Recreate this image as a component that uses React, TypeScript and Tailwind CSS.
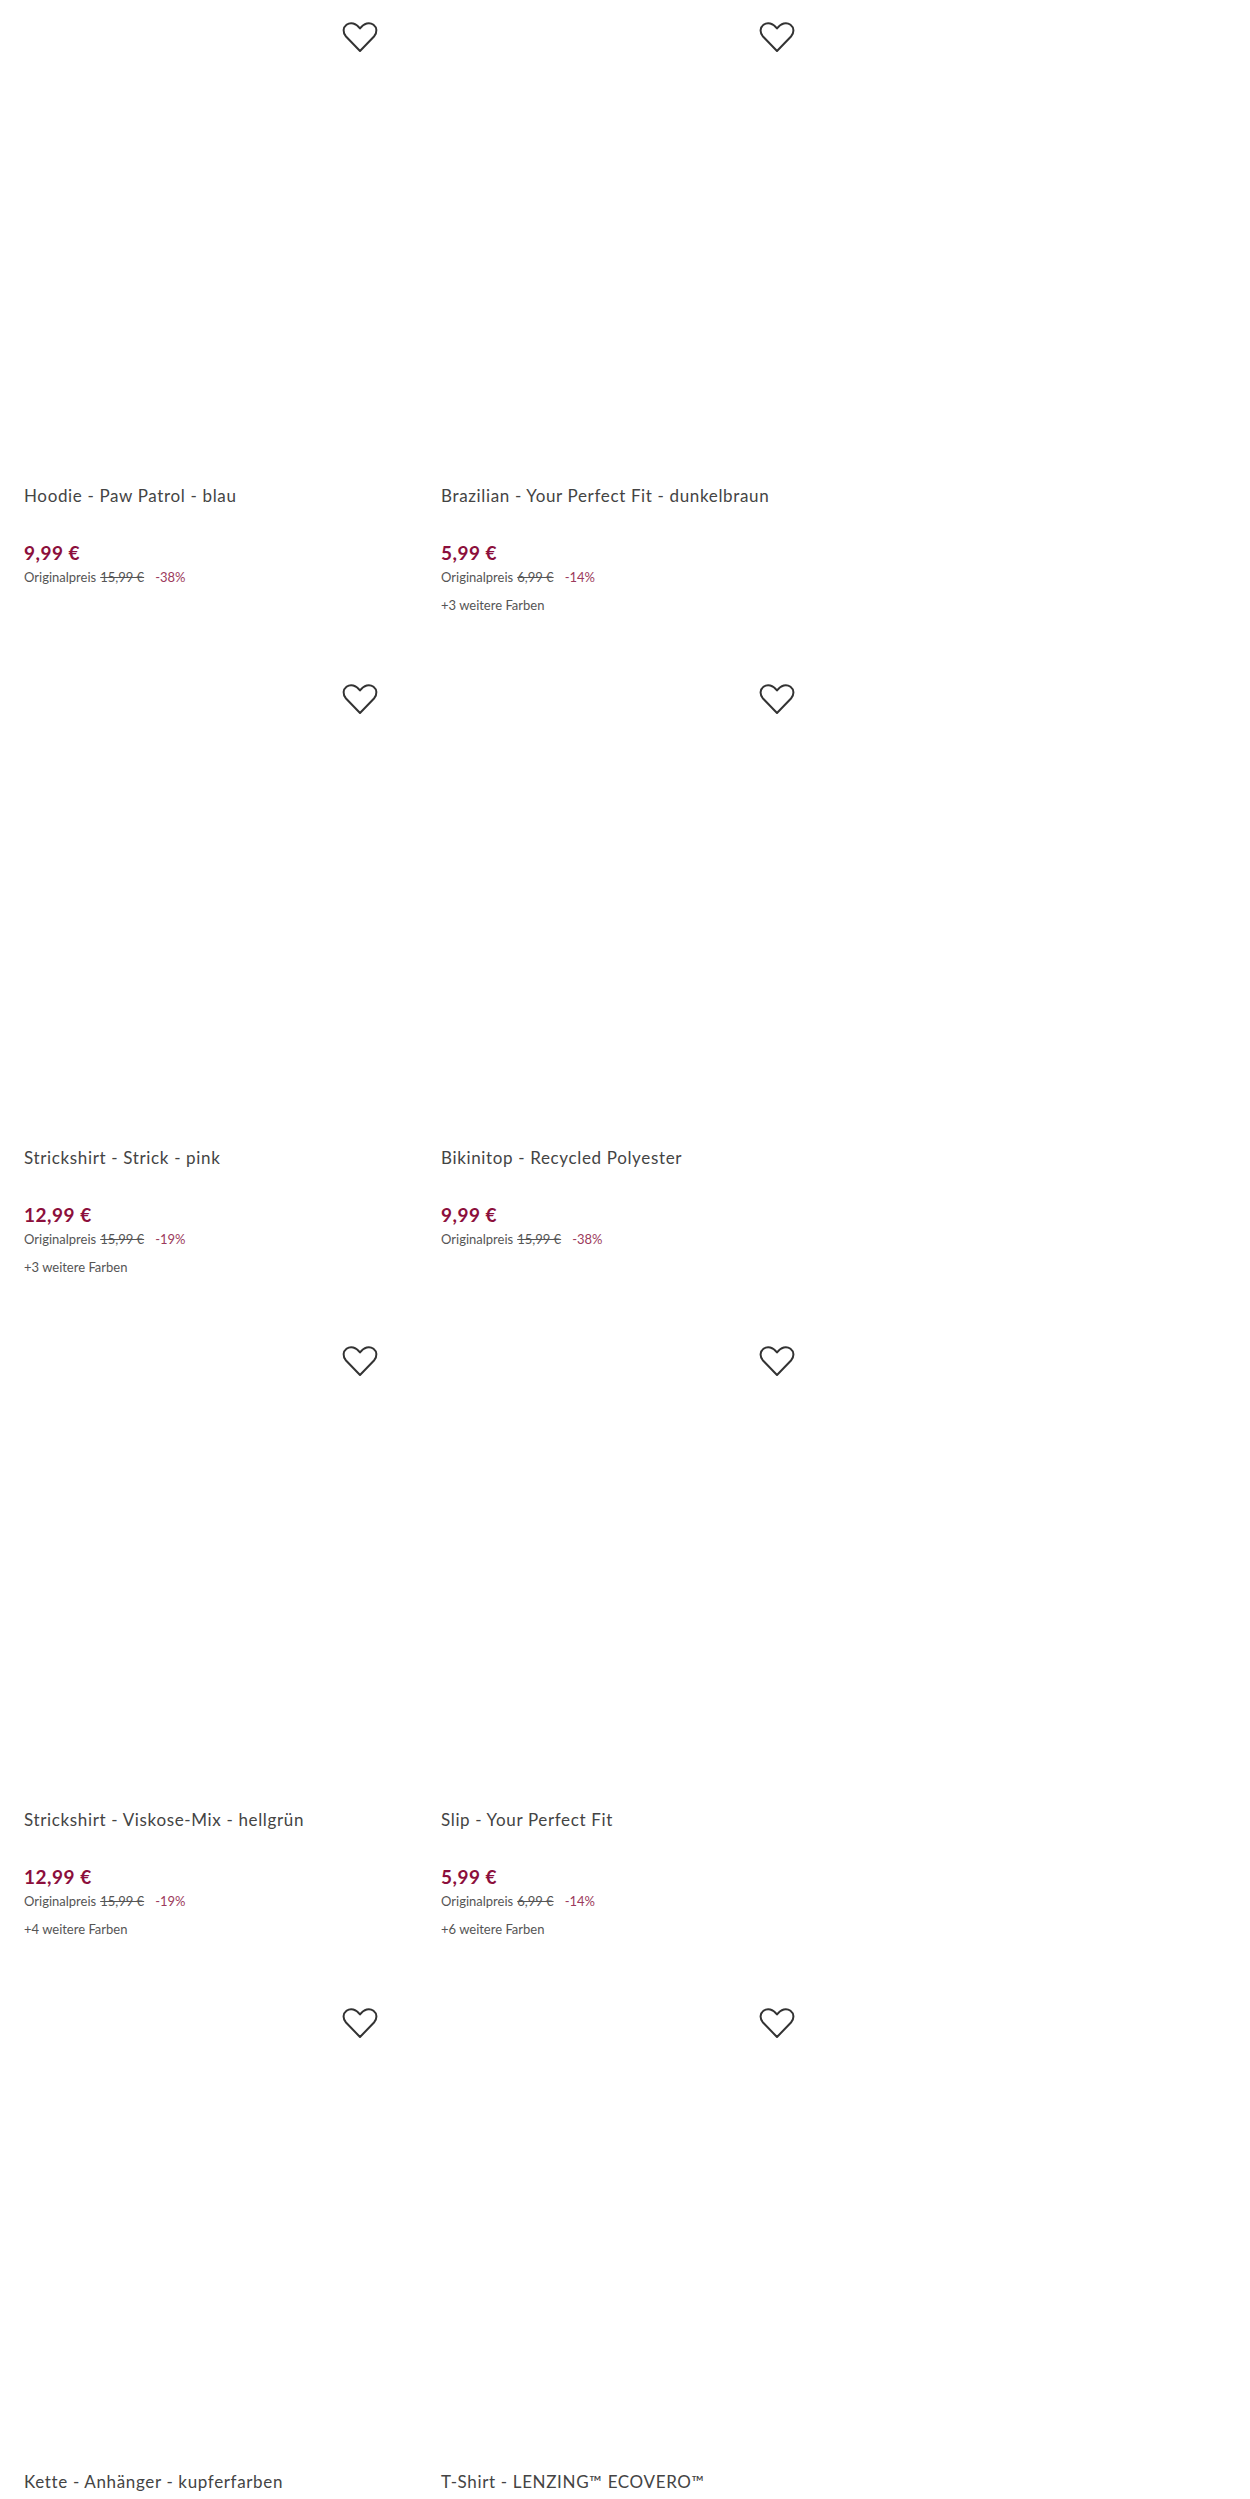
type Product = {
  title: string;
  price?: string;
  original?: string;
  discount?: string;
  colors?: string;
};

const products: Product[] = [
  { title: 'Hoodie - Paw Patrol - blau', price: '9,99 €', original: '15,99 €', discount: '-38%' },
  { title: 'Brazilian - Your Perfect Fit - dunkelbraun', price: '5,99 €', original: '6,99 €', discount: '-14%', colors: '+3 weitere Farben' },
  { title: 'Strickshirt - Strick - pink', price: '12,99 €', original: '15,99 €', discount: '-19%', colors: '+3 weitere Farben' },
  { title: 'Bikinitop - Recycled Polyester', price: '9,99 €', original: '15,99 €', discount: '-38%' },
  { title: 'Strickshirt - Viskose-Mix - hellgrün', price: '12,99 €', original: '15,99 €', discount: '-19%', colors: '+4 weitere Farben' },
  { title: 'Slip - Your Perfect Fit', price: '5,99 €', original: '6,99 €', discount: '-14%', colors: '+6 weitere Farben' },
  { title: 'Kette - Anhänger - kupferfarben' },
  { title: 'T-Shirt - LENZING™ ECOVERO™' },
];

function HeartIcon() {
  return (
    <svg viewBox="0 0 36 32" className="h-[32px] w-[36px]" fill="none" stroke="#333" strokeWidth="2" strokeLinejoin="round">
      <path d="M18 30 L4 15.5 C0.5 11.5 1 6.5 4.5 3.8 C8.5 0.8 14 2 18 7.5 C22 2 27.5 0.8 31.5 3.8 C35 6.5 35.5 11.5 32 15.5 Z" />
    </svg>
  );
}

function ProductCard({ product }: { product: Product }) {
  return (
    <div className="h-[662px]">
      <div className="relative h-[484px]">
        <button className="absolute right-[39px] top-[21px]">
          <HeartIcon />
        </button>
      </div>
      <div className="px-6">
        <h2 className="text-[17px] leading-6 tracking-[0.65px] text-[#444]">{product.title}</h2>
        {product.price && (
          <>
            <p className="mt-[33px] text-[19px] leading-6 font-bold tracking-[0.5px] text-[#8c0f3c]">{product.price}</p>
            <p className="mt-[2px] flex text-[13px] leading-5 text-[#555]">
              Originalpreis <span className="ml-1 line-through">{product.original}</span>
              <span className="ml-[11px] text-[#9c3a5c]">{product.discount}</span>
            </p>
          </>
        )}
        {product.colors && <p className="mt-2 text-[13px] leading-5 text-[#555]">{product.colors}</p>}
      </div>
    </div>
  );
}

export default function App() {
  return (
    <main className="h-[2499px] overflow-hidden bg-white font-['Lato',sans-serif]">
      <div className="grid grid-cols-[417px_417px]">
        {products.map((product) => (
          <ProductCard key={product.title} product={product} />
        ))}
      </div>
    </main>
  );
}
